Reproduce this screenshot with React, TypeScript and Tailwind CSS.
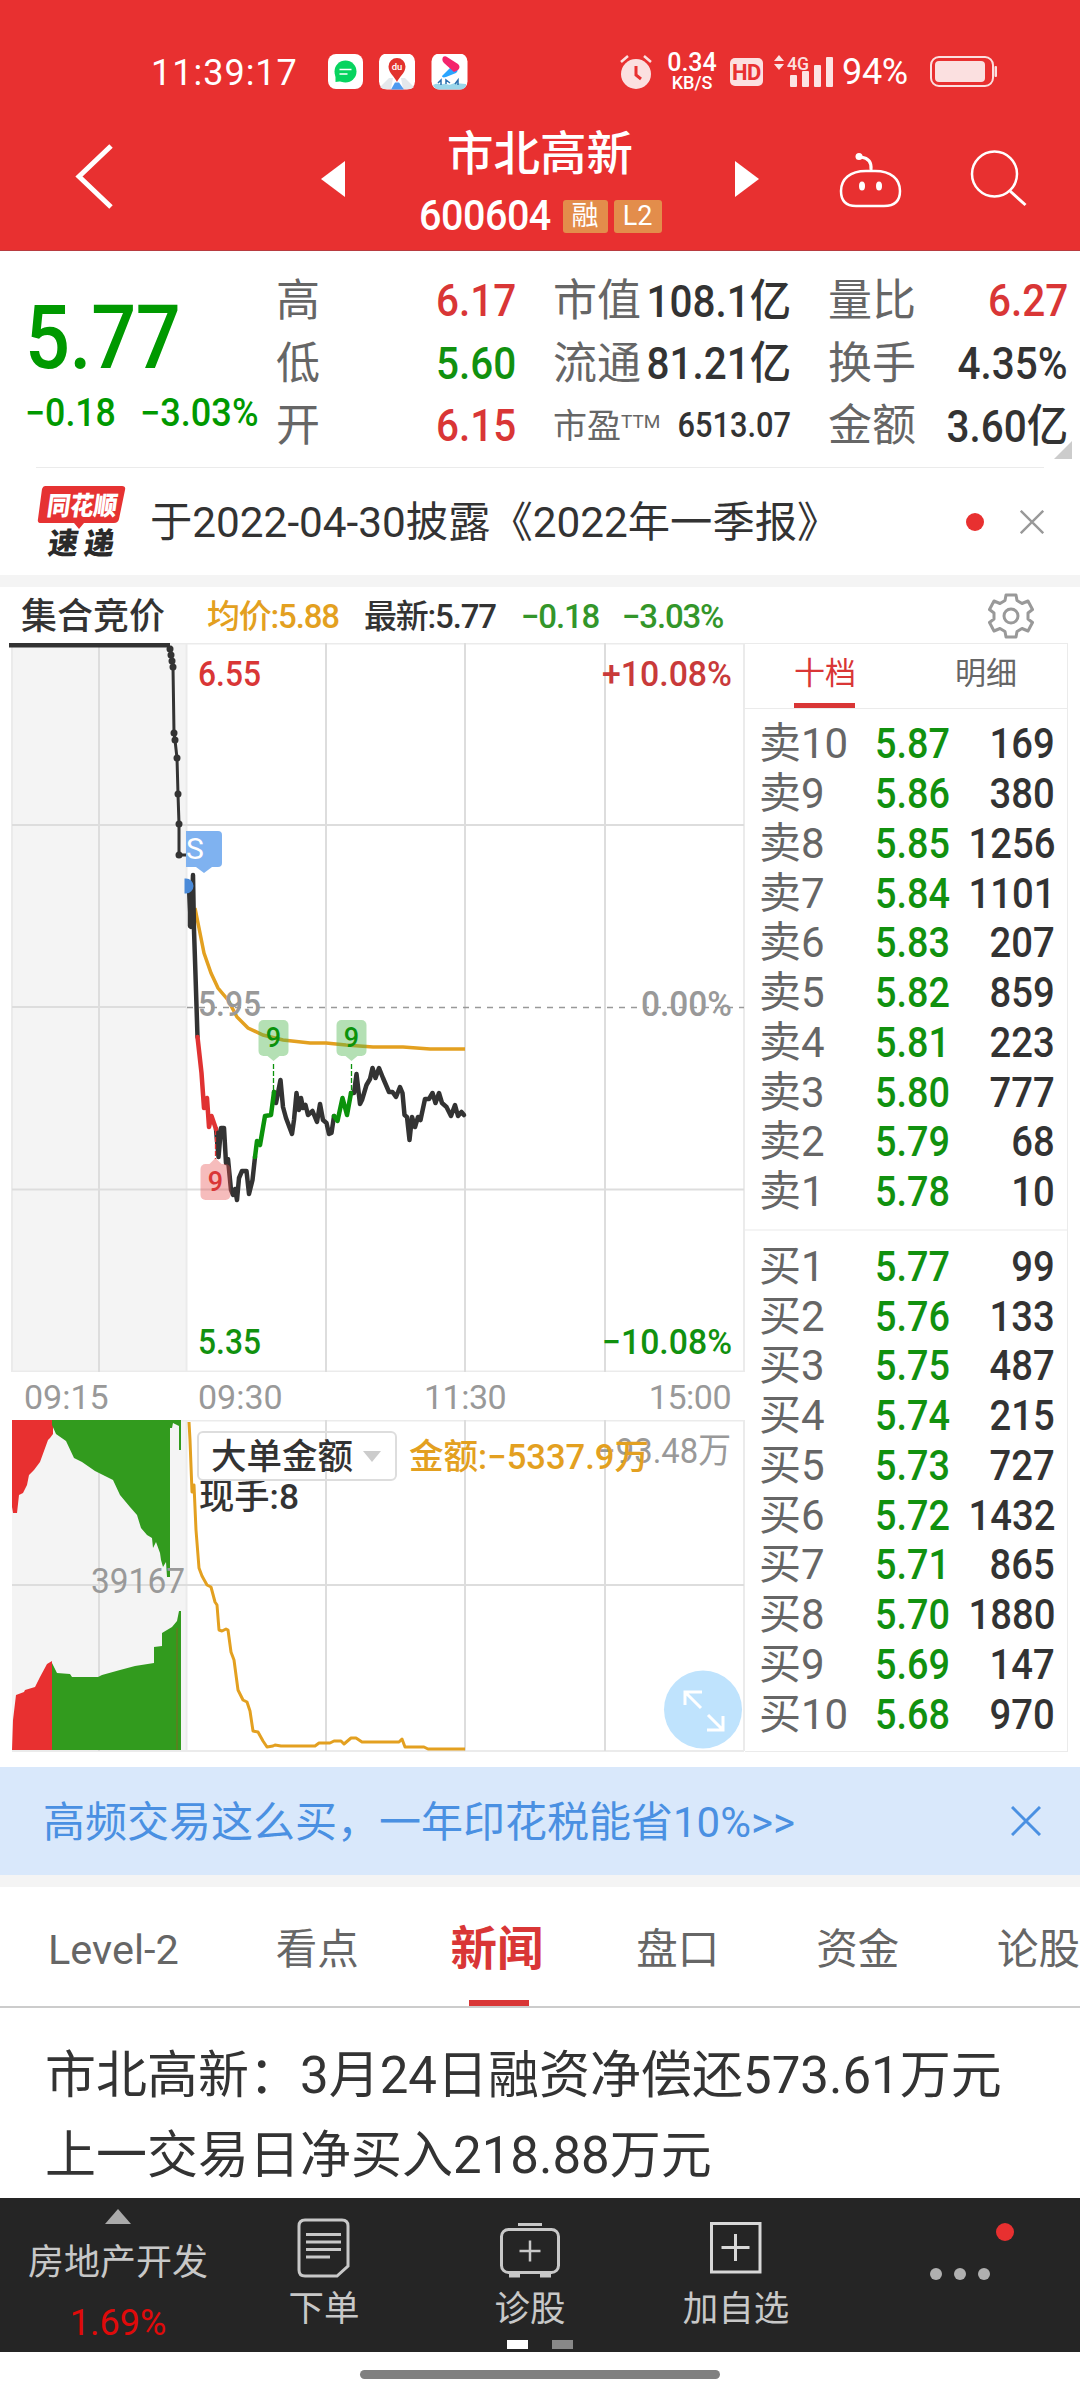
import type { ReactNode } from "react";

const CJK = "font-[Roboto,'Noto_Sans_CJK_SC',sans-serif]";

const sells = [
  ["卖10", "5.87", "169"],
  ["卖9", "5.86", "380"],
  ["卖8", "5.85", "1256"],
  ["卖7", "5.84", "1101"],
  ["卖6", "5.83", "207"],
  ["卖5", "5.82", "859"],
  ["卖4", "5.81", "223"],
  ["卖3", "5.80", "777"],
  ["卖2", "5.79", "68"],
  ["卖1", "5.78", "10"],
];

const buys = [
  ["买1", "5.77", "99"],
  ["买2", "5.76", "133"],
  ["买3", "5.75", "487"],
  ["买4", "5.74", "215"],
  ["买5", "5.73", "727"],
  ["买6", "5.72", "1432"],
  ["买7", "5.71", "865"],
  ["买8", "5.70", "1880"],
  ["买9", "5.69", "147"],
  ["买10", "5.68", "970"],
];

const auctionDots = [
  [170, 649], [171, 655], [172, 661], [173, 667], [174, 733], [175, 740], [177, 758], [178, 794], [179, 824], [179, 855],
];

function StatusBar() {
  return (
    <div className="flex h-[98px] items-center pt-[46px] text-white">
      <span className="mt-[2px] ml-[151px] w-[177px] text-[36px] leading-none tracking-[1px]">11:39:17</span>
      <svg width="140" height="36" viewBox="328 55 140 36" className="shrink-0">
        <rect x="328" y="55" width="35" height="35" rx="8" fill="#fff" />
        <circle cx="345.500" cy="72.500" r="11" fill="#07d45f" />
        <path d="M335.500 75v8l8-1z" fill="#07d45f" />
        <path d="M339.500 70.500h12M339.500 75h8" stroke="#fff" strokeWidth="1.600" />
        <rect x="379" y="54.500" width="36" height="36" rx="8" fill="#fff" />
        <path d="M380 88l9-9h4l-2 11h-8zM414 88l-9-9h-4l2 11h8z" fill="#e4e8ec" />
        <path d="M391 90.500l4-7h4l5 7z" fill="#4f9bf0" />
        <path d="M397 83c-2-5-8.500-9-8.500-15.500a8.500 8.500 0 0 1 17 0c0 6.500-6.500 10.500-8.500 15.500z" fill="#e2322d" />
        <text x="397" y="71" textAnchor="middle" fill="#fff" fontSize="9.500" fontWeight="500">du</text>
        <rect x="431.500" y="54.500" width="36" height="36" rx="8" fill="#fff" />
        <path d="M442 77l9-9 5 2c2 1 2 2 0 4l-10 4c-3 1-4 0-4-1z" fill="#2aa5ff" />
        <path d="M443 58c1-1 3-1 4 0l11 7c2 2 2 4 0 6l-4 2-10-9c-2-2-2-4-1-6z" fill="#f4246c" />
        <path d="M433 86c5-3 6 0 10-1s5 2 9 0 7 0 14 0v2c-1 2-3 3.500-5 3.500h-22c-3 0-5-2-6-4.500z" fill="#9bd6ea" />
        <path d="M438 84l3-3v5M446 85v-4l4 3M455 85l3-4v5" stroke="#2a6fb0" strokeWidth="1.500" fill="none" />
      </svg>
      <div className="flex-1" />
      <svg width="34" height="38" viewBox="618 53 34 38" className="shrink-0 opacity-85">
        <circle cx="635" cy="74" r="15" fill="#fff" />
        <path d="M635 66v9l5 4" stroke="#e83030" strokeWidth="3" fill="none" />
        <path d="M620 62l7-6M650 62l-7-6" stroke="#fff" strokeWidth="2.500" />
      </svg>
      <div className="ml-[11px] flex w-[56px] flex-col items-center">
        <span className="text-[25px] leading-[22px] font-medium">0.34</span>
        <span className="text-[18px] leading-[18px] font-medium">KB/S</span>
      </div>
      <span className="ml-[10px] flex h-7 w-[33px] items-center justify-center rounded-[5px] bg-white/85 text-[22px] font-bold tracking-[-0.500px] text-[#e83030]">HD</span>
      <svg width="62" height="44" viewBox="774 50 62 44" className="ml-[9px] shrink-0" fill="#fff" fillOpacity=".87">
        <path d="M776 61l5-6 5 6zM776 64l5 6 5-6z" />
        <text x="789" y="70" fontSize="19" fontWeight="500" textLength="22" lengthAdjust="spacingAndGlyphs">4G</text>
        <rect x="792" y="75" width="7" height="12" rx="1" />
        <rect x="804" y="71" width="7" height="16" rx="1" />
        <rect x="816" y="65" width="7" height="22" rx="1" />
        <rect x="828" y="57" width="7" height="30" rx="1" />
      </svg>
      <span className="ml-[8px] w-[88px] text-[36px] leading-none tracking-[-0.300px]">94%</span>
      <svg width="68" height="32" viewBox="930 57 68 32" className="mr-[82px] shrink-0 opacity-85">
        <rect x="931" y="58" width="62" height="29" rx="8" fill="none" stroke="#fff" strokeWidth="2" />
        <rect x="935" y="62" width="50" height="21" rx="4" fill="#fff" />
        <rect x="994.500" y="67" width="2.500" height="11" rx="1" fill="#fff" />
      </svg>
    </div>
  );
}

function Header() {
  return (
    <header className="h-[251px] border-b border-[#b83b40] bg-[#e83030] text-white">
      <StatusBar />
      <div className="flex h-[152px] items-start">
        <svg width="45" height="72" viewBox="72 140 45 72" className="mt-[42px] ml-[72px]">
          <path d="M111 146L79 176.500l32 30.500" fill="none" stroke="#fff" strokeWidth="5" />
        </svg>
        <svg width="24" height="36" viewBox="0 0 24 36" className="mt-[63px] ml-[204px]">
          <path d="M24 0v36L0 18z" fill="#fff" />
        </svg>
        <div className="flex w-[390px] flex-col items-center">
          <h1 className="mt-[32px] text-[46.500px] leading-[48px] font-medium">市北高新</h1>
          <div className="mt-[16px] flex items-center">
            <span className="w-[130px] origin-left scale-x-94 text-[42px] leading-[44px] font-medium tracking-[-0.500px]">600604</span>
            <span className="ml-3.5 flex h-[33px] w-[45px] items-center justify-center rounded-[3px] bg-[#e38d4b] text-[27px]">融</span>
            <span className="ml-1.5 flex h-[33px] w-[48px] items-center justify-center rounded-[3px] bg-[#e38d4b] text-[27px]">L2</span>
          </div>
        </div>
        <svg width="24" height="36" viewBox="0 0 24 36" className="mt-[63px]">
          <path d="M0 0v36l24-18z" fill="#fff" />
        </svg>
        <svg width="66" height="58" viewBox="838 151 66 58" className="mt-[53px] ml-[79px]" fill="none" stroke="#fff" strokeWidth="2.500">
          <path d="M866 171h9c16 0 25 8 25 20 0 10-6 15-16 15h-28c-10 0-15-5-15-15 0-12 9-20 25-20z" />
          <path d="M871 170c1-8-3-12-10-13" strokeWidth="3" />
          <circle cx="859" cy="156.500" r="3.500" fill="#fff" stroke="none" />
          <ellipse cx="862" cy="186" rx="3" ry="4.500" fill="#fff" stroke="none" />
          <ellipse cx="879" cy="186" rx="3" ry="4.500" fill="#fff" stroke="none" />
        </svg>
        <svg width="60" height="60" viewBox="968 148 60 60" className="mt-[50px] ml-[64px]" fill="none" stroke="#fff" strokeWidth="2.500">
          <circle cx="994.500" cy="174" r="22.500" />
          <path d="M1010 191l15.500 14" strokeWidth="3" />
        </svg>
      </div>
    </header>
  );
}

function Quote({ label, value, color = "text-[#333]" }: { label: string; value: ReactNode; color?: string }) {
  return (
    <div className="flex h-[62.500px] items-center justify-between">
      <span className="text-[44px] text-[#666]">{label}</span>
      <span className={`-ml-6 origin-right scale-x-92 text-[44px] font-medium ${color}`}>{value}</span>
    </div>
  );
}

function QuotePanel() {
  const yi = <span className="text-[45px]">亿</span>;
  return (
    <section className="relative flex h-[216px] pt-[19px] whitespace-nowrap">
      <div className="ml-[25px] w-[251px] text-[#009900]">
        <div className="mt-[18px] origin-left scale-x-89 text-[89px] leading-[100px] font-medium tracking-[-0.500px]">5.77</div>
        <div className="mt-[3px] flex text-[38px] leading-[44px] font-medium">
          <span className="w-[115px] origin-left scale-x-94">−0.18</span>
          <span className="origin-left scale-x-95">−3.03%</span>
        </div>
      </div>
      <div className="w-[240px]">
        <Quote label="高" value="6.17" color="text-[#d93636]" />
        <Quote label="低" value="5.60" color="text-[#11910f]" />
        <Quote label="开" value="6.15" color="text-[#d93636]" />
      </div>
      <div className="ml-[37px] w-[238px]">
        <Quote label="市值" value={<>108.1{yi}</>} />
        <Quote label="流通" value={<>81.21{yi}</>} />
        <div className="flex h-[62.500px] items-center justify-between">
          <span className="text-[34px] text-[#666]">
            市盈<sup className="text-[19px]">TTM</sup>
          </span>
          <span className="origin-right scale-x-88 text-[35px] font-medium text-[#333]">6513.07</span>
        </div>
      </div>
      <div className="ml-[37px] w-[240px]">
        <Quote label="量比" value="6.27" color="text-[#d93636]" />
        <Quote label="换手" value="4.35%" />
        <Quote label="金额" value={<>3.60{yi}</>} />
      </div>
      <svg width="18" height="18" className="absolute right-2 bottom-2">
        <path d="M18 0v18H0z" fill="#ccc" />
      </svg>
    </section>
  );
}

function Cross({ size, color, width }: { size: number; color: string; width: number }) {
  return (
    <svg width={size} height={size} viewBox="0 0 30 30" stroke={color} strokeWidth={width} fill="none">
      <path d="M1 1l28 28M29 1L1 29" />
    </svg>
  );
}

function NoticeRow() {
  return (
    <section className="mx-[36px] flex h-[108px] items-center border-t border-[#ebebeb]">
      <svg width="92" height="90" viewBox="36 475 92 90" className="shrink-0">
        <path d="M45 484h77q4 0 3 4l-6 29q-1 4-5 4H84l-5 6-5-6H41q-4 0-3-4l4-30q1-3 3-3z" fill="#e63232" />
        <text transform="translate(46 513) skewX(-8)" fontSize="26" fontWeight="900" fill="#fff" textLength="70" lengthAdjust="spacingAndGlyphs" className="font-['Noto_Sans_CJK_SC']">同花顺</text>
        <text transform="translate(47 552) skewX(-8)" fontSize="30" fontWeight="900" fill="#2a2a2a" textLength="66" className="font-['Noto_Sans_CJK_SC']">速递</text>
      </svg>
      <span className="mt-[3px] ml-[22px] text-[42.300px] whitespace-nowrap text-[#333]">于2022-04-30披露《2022年一季报》</span>
      <span className="ml-auto size-[18px] rounded-full bg-[#e83030]" />
      <span className="ml-[36px]">
        <Cross size={24} color="#999" width={3} />
      </span>
    </section>
  );
}

function Gear() {
  return (
    <svg width="46" height="46" viewBox="-23 -23 46 46" fill="none" stroke="#999" strokeWidth="3" strokeLinejoin="round">
      <path d="M-5-21H5L6-15.500 11-12.500 17-15 21.500-6.500 17-3V3L21.500 6.500 17 15 11 12.500 6 15.500 5 21H-5L-6 15.500-11 12.500-17 15-21.500 6.500-17 3V-3L-21.500-6.500-17-15-11-12.500-6-15.500z" />
      <circle r="7" />
    </svg>
  );
}

function ChartHeader() {
  return (
    <div className="flex h-[56px] items-center pt-[4px] text-[33px] font-medium tracking-[-1.200px] whitespace-nowrap">
      <span className="ml-[21px] w-[186px] text-[36px] tracking-normal text-[#333]">集合竞价</span>
      <span className="w-[157px] text-[#e3a020]">均价:5.88</span>
      <span className="w-[157px] text-[#333]">最新:5.77</span>
      <span className="w-[101px] text-[#33962a]">−0.18</span>
      <span className="text-[#33962a]">−3.03%</span>
      <span className="-mt-[3px] mr-[46px] ml-auto">
        <Gear />
      </span>
    </div>
  );
}

function Flag({ x, y, up = false, fill, color }: { x: number; y: number; up?: boolean; fill: string; color: string }) {
  return (
    <g>
      <rect x={x - 15} y={y} width="30" height="36" rx="5" fill={fill} />
      <path d={up ? `M${x - 6} ${y}l6-6 6 6z` : `M${x - 6} ${y + 36}l6 5 6-5z`} fill={fill} />
      <text x={x} y={y + 27} textAnchor="middle" fontSize="27" fontWeight="500" fill={color}>9</text>
    </g>
  );
}

function PriceChart() {
  return (
    <svg width="745" height="729" viewBox="0 643 745 729" className="block" fontSize="35" fontWeight="500">
      <rect x="12" y="643" width="174" height="729" fill="#f4f4f4" />
      <path d="M12 643.500H744M12 1371.500H744M12 643V1372M186.500 643V1372M744 643V1372" stroke="#ebebeb" strokeWidth="2" fill="none" />
      <path d="M99 643V1372M326 643V1372M465 643V1372M605 643V1372M12 825H744M12 1007H186M12 1189.500H744" stroke="#ddd" strokeWidth="2" fill="none" />
      <path d="M187 1007.500H744" stroke="#999" strokeWidth="1.500" strokeDasharray="6 6" />

      <text x="198" y="686" fill="#d93636" textLength="63" lengthAdjust="spacingAndGlyphs">6.55</text>
      <text x="602" y="686" fill="#c93a3a" textLength="130" lengthAdjust="spacingAndGlyphs">+10.08%</text>
      <text x="198" y="1354" fill="#11910f" textLength="63" lengthAdjust="spacingAndGlyphs">5.35</text>
      <text x="602" y="1354" fill="#11910f" textLength="130" lengthAdjust="spacingAndGlyphs">−10.08%</text>

      <path d="M195 908L204 953 211 973 218 988 228 1000 237 1017 248 1028 263 1035 283 1040 310 1043 326 1043 346 1045 373 1047 403 1047 430 1049H465" stroke="#e3a020" strokeWidth="3.500" fill="none" />
      <text x="198" y="1016" fill="#999" textLength="63" lengthAdjust="spacingAndGlyphs">5.95</text>
      <text x="641" y="1016" fill="#999" textLength="91" lengthAdjust="spacingAndGlyphs">0.00%</text>

      <path d="M9 645H170" stroke="#333" strokeWidth="5" />
      <path d="M170 646L171 655 172 661 173 667 174 733 175 740 177 758 178 794 179 824V855H187" stroke="#333" strokeWidth="3" fill="none" />
      {auctionDots.map(([x, y]) => (
        <circle key={y} cx={x} cy={y} r="3.500" fill="#333" />
      ))}

      <g fill="none" strokeWidth="4.500" strokeLinejoin="round" strokeLinecap="round">
        <path d="M189 888L191 927 193 875 194 930 195.500 975 197.500 1037" stroke="#333" />
        <path d="M190 890V926M192 885V926" stroke="#333" />
        <path d="M216 1129L218.500 1157 221 1128H224L226 1163 228 1159 231 1190 233 1195 235 1189 237 1200 239 1178 242 1171H246.500L249 1194 252.500 1180 255 1157" stroke="#333" />
        <path d="M274 1092L276 1103 280.500 1080 283 1107 286 1118 292 1134 294 1120 296.500 1093 299 1110 301 1098 303 1108 305.500 1105 308 1115 312.500 1111 317 1122 320 1104 323 1120 326.500 1123 329 1134 331.500 1133 334 1116" stroke="#333" />
        <path d="M351 1093H354L356.500 1074 360 1104 362 1100 366.500 1085 370 1079 372.500 1068 375.500 1078 379 1068 383 1078 389 1092H392.500L396 1097 400 1087 402.500 1093 404.500 1115 407 1117 409.500 1140 412 1117 415 1127 418 1117 420.500 1120 425 1099H429L432.500 1093 435.500 1103 439 1093 442 1103 446.500 1107 451 1116 455 1105 458 1116 461.500 1112 464 1115" stroke="#333" />
        <path d="M197.500 1037L201.500 1073 204 1108 207 1098 209 1127 211.500 1116 216 1129" stroke="#e03232" />
        <path d="M255 1157L257 1141 260 1145 265 1116 271 1115 274 1092M334 1116L337.500 1121 342.500 1098 347 1115 351 1093" stroke="#0b920b" />
      </g>
      <path d="M273.500 1064V1092M351.500 1064V1092" stroke="#0b920b" strokeWidth="1.300" strokeDasharray="5 2" />
      <path d="M215.500 1130V1159" stroke="#e03232" strokeWidth="1.300" strokeDasharray="5 2" />

      <Flag x={273.5} y={1020} fill="rgba(76,180,76,.42)" color="#0b920b" />
      <Flag x={351.5} y={1020} fill="rgba(76,180,76,.42)" color="#0b920b" />
      <Flag x={215.5} y={1164} up fill="rgba(232,80,80,.38)" color="#d93636" />

      <path d="M186 831h32q4 0 4 4v28q0 4-4 4h-6l-8 6-8-6h-10z" fill="#7fb2f0" />
      <text x="186" y="859" fontSize="30" fontWeight="400" fill="#fff">S</text>
      <path d="M186 880a6 6 0 0 1 0 12z" fill="#4a8ad8" stroke="#4a8ad8" strokeWidth="3" />
    </svg>
  );
}

function VolumeChart() {
  return (
    <div className="relative h-[332px]">
      <svg width="745" height="332" viewBox="0 1420 745 332" className="block" fontSize="35" fontWeight="500">
        <rect x="12" y="1420" width="174" height="331" fill="#f4f4f4" />
        <path d="M12 1420.500H744M12 1751H744M186.500 1420V1751M744 1420V1751" stroke="#ebebeb" strokeWidth="2" fill="none" />
        <path d="M99 1420V1751M326 1420V1751M465 1420V1751M605 1420V1751M12 1585H744" stroke="#ddd" strokeWidth="2" fill="none" />
        <path d="M12 1420H53V1434L50 1438 48 1440 40 1462 34 1470 29 1475 27 1485 23 1493 19 1495 17 1513H13L12 1507zM12 1750L13 1720 16 1695 24 1692 25 1690 35 1687 40 1677 47 1664 52 1661V1750z" fill="#e83030" />
        <path d="M52 1420H181V1450H179V1426L173 1423 172 1428H170V1577H167L166 1562 163 1567 161 1560 160 1553 156 1542 153 1548 152 1538 147 1535 141 1528 137 1515 130 1507 120 1495 113 1480 103 1475 95 1471 82 1462 74 1458 66 1441 56 1434 52 1425zM52 1750V1663L57 1673 70 1674 72 1677H98L102 1675 120 1670 135 1666 154 1663V1647L162 1646V1633L172 1627 177 1621 179 1611H181V1750z" fill="#329b1e" />
        <path d="M177 1628V1750" stroke="#7a6a20" strokeWidth="1" />
        <text x="91" y="1593" fill="#999" fontWeight="400" textLength="94" lengthAdjust="spacingAndGlyphs">39167</text>
        <text x="597" y="1463" fill="#999" fontWeight="400" textLength="134" lengthAdjust="spacingAndGlyphs">−93.48万</text>
        <path d="M189 1422L190 1440 192 1492 194 1485 196 1530 199 1568 202 1576 207 1585 211 1587 215 1602 217 1605 219 1630 222 1631 226 1629 228 1630 231 1652 234 1660 238 1690 243 1700 247 1702 250 1711 253 1731 258 1732 263 1741 267 1747 273 1746 275 1745 281 1746H315L319 1743H330L334 1741H341L344 1744 351 1738H356L362 1742H399L402 1739 405 1747H424L428 1749H465" stroke="#e3a020" strokeWidth="3" fill="none" strokeLinejoin="round" />
        <text x="409" y="1469" fill="#e3a020" textLength="240" lengthAdjust="spacingAndGlyphs">金额:−5337.9万</text>
        <text x="199" y="1509" fill="#333" textLength="100" lengthAdjust="spacingAndGlyphs">现手:8</text>
        <circle cx="703" cy="1709.500" r="39" fill="#bfe3fd" />
        <path d="M701 1708L686 1693M685 1705V1692H702M708 1715L722 1729M723 1716V1730H707" stroke="#fff" strokeWidth="3" fill="none" />
      </svg>
      <button className="absolute top-[11px] left-[197px] flex h-[50px] w-[200px] items-center rounded-md border-2 border-[#ddd] pl-[12px] text-[35.500px] font-medium text-[#333]">
        <span className="mt-[3px]">大单金额</span>
        <svg width="18" height="11" className="ml-[10px]">
          <path d="M0 0h18l-9 11z" fill="#ccc" />
        </svg>
      </button>
    </div>
  );
}

function BookRows({ rows }: { rows: string[][] }) {
  return (
    <div>
      {rows.map(([label, price, amount]) => (
        <div key={label} className="flex h-[49.750px] items-center pr-[12px] pl-[14px] text-[42px]">
          <span className="w-[116px] text-[#666]">{label}</span>
          <span className="origin-left scale-x-90 font-medium text-[#11910f]">{price}</span>
          <span className="ml-auto origin-right scale-x-91 font-medium text-[#333]">{amount}</span>
        </div>
      ))}
    </div>
  );
}

function OrderBook() {
  return (
    <aside className="h-[1109px] w-[323px] border border-l-0 border-[#ebebeb]">
      <div className="flex h-[65px] border-b border-[#ebebeb] text-[31px] leading-[60px]">
        <div className="ml-[49px] w-[61px] border-b-5 border-[#d93636] whitespace-nowrap text-[#d93636]">十档</div>
        <div className="ml-[100px] text-[#666]">明细</div>
      </div>
      <div className="mt-[10px] border-b-2 border-[#f4f4f4] pb-[12px]">
        <BookRows rows={sells} />
      </div>
      <div className="mt-[11px]">
        <BookRows rows={buys} />
      </div>
    </aside>
  );
}

function Tabs() {
  return (
    <nav className="flex h-[121px] overflow-hidden border-b-2 border-[#ccc] text-[41.500px] leading-[125px] whitespace-nowrap text-[#666]">
      <span className="ml-[48px] w-[228px]">Level-2</span>
      <span className="w-[175px]">看点</span>
      <span className="relative w-[186px] text-[46.500px] font-bold text-[#d93636]">
        新闻
        <i className="absolute top-[113px] left-[18px] h-[6px] w-[60px] bg-[#d93636]" />
      </span>
      <span className="w-[180px]">盘口</span>
      <span className="w-[181px]">资金</span>
      <span>论股</span>
    </nav>
  );
}

function NavItem({ label, icon, className }: { label: string; icon: ReactNode; className: string }) {
  return (
    <div className={`flex flex-col items-center pt-[19px] ${className}`}>
      {icon}
      <span className="mt-[6px] text-[35.500px] leading-[48px]">{label}</span>
    </div>
  );
}

function BottomBar() {
  return (
    <footer className="relative flex h-[154px] bg-[#252525] whitespace-nowrap text-[#c8c8c8]">
      <div className="ml-[18px] flex w-[200px] flex-col items-center pt-[11px]">
        <svg width="26" height="15">
          <path d="M13 0l13 15H0z" fill="#aaa" />
        </svg>
        <span className="mt-[15px] text-[36px] leading-[48px]">房地产开发</span>
        <span className="mt-[12px] text-[36px] leading-[48px] text-[#e00a0a]">1.69%</span>
      </div>
      <NavItem
        label="下单"
        className="ml-[56px] w-[100px]"
        icon={
          <svg width="56" height="62" viewBox="297 2217 56 62" fill="none" stroke="#c8c8c8" strokeWidth="3">
            <path d="M306 2220h37q6 0 6 6v40l-11 10h-32q-6 0-6-6v-44q0-6 6-6z" />
            <path d="M307 2234.500h35M307 2242h35M307 2249.500h35M307 2257h24" />
          </svg>
        }
      />
      <NavItem
        label="诊股"
        className="ml-[106px] w-[100px]"
        icon={
          <svg width="64" height="62" viewBox="498 2217 64 62" fill="none" stroke="#c8c8c8" strokeWidth="3">
            <rect x="501.500" y="2229.500" width="57" height="43" rx="7" />
            <path d="M518 2224.500h24" />
            <path d="M509 2275.500h11M540 2275.500h11" strokeWidth="4" />
            <path d="M519.500 2251h21M530 2240.500v21" strokeWidth="2.500" />
          </svg>
        }
      />
      <NavItem
        label="加自选"
        className="ml-[96px] w-[120px]"
        icon={
          <svg width="56" height="62" viewBox="708 2217 56 62" fill="none" stroke="#d8d8d8" strokeWidth="3">
            <rect x="711.500" y="2223.500" width="48.500" height="48.500" />
            <path d="M721.500 2247.500h28M735.500 2234v27" />
          </svg>
        }
      />
      <div className="mt-[70px] ml-[134px] flex gap-3">
        <i className="size-3 rounded-full bg-[#b0b0b0]" />
        <i className="size-3 rounded-full bg-[#b0b0b0]" />
        <i className="size-3 rounded-full bg-[#b0b0b0]" />
      </div>
      <i className="absolute top-[25px] left-[996px] size-[18px] rounded-full bg-[#e83030]" />
      <i className="absolute bottom-[3px] left-[507px] h-[9px] w-[21px] bg-white" />
      <i className="absolute bottom-[3px] left-[552px] h-[9px] w-[21px] bg-[#888]" />
    </footer>
  );
}

export default function App() {
  return (
    <div className={`flex h-[2400px] w-[1080px] flex-col overflow-hidden bg-white ${CJK}`}>
      <Header />
      <QuotePanel />
      <NoticeRow />
      <div className="h-[12px] bg-[#f4f4f4]" />
      <ChartHeader />
      <main className="flex h-[1124px]">
        <div className="w-[745px]">
          <PriceChart />
          <div className="flex h-[48px] items-center pt-[2px] text-[34px] text-[#999]">
            <span className="ml-[24px] w-[174px]">09:15</span>
            <span className="w-[226px]">09:30</span>
            <span className="tracking-[-0.500px]">11:30</span>
            <span className="mr-[14px] ml-auto tracking-[-0.500px]">15:00</span>
          </div>
          <VolumeChart />
        </div>
        <OrderBook />
      </main>
      <section className="flex h-[108px] items-center bg-[#d9e8fb] pr-[39px] pl-[43px]">
        <span className="mt-[3px] text-[42px] text-[#4a90e2]">高频交易这么买，一年印花税能省10%&gt;&gt;</span>
        <span className="ml-auto">
          <Cross size={30} color="#4a90e2" width={3} />
        </span>
      </section>
      <div className="h-[12px] bg-[#f4f4f4]" />
      <Tabs />
      <article className="h-[190px] pt-[28px] pl-[45px] text-[51px] leading-[80px] whitespace-nowrap text-[#333]">
        <p>市北高新：3月24日融资净偿还573.61万元</p>
        <p>上一交易日净买入218.88万元</p>
      </article>
      <BottomBar />
      <div className="mx-auto mt-[18px] h-[9px] w-[360px] rounded-full bg-[#808080]" />
    </div>
  );
}
